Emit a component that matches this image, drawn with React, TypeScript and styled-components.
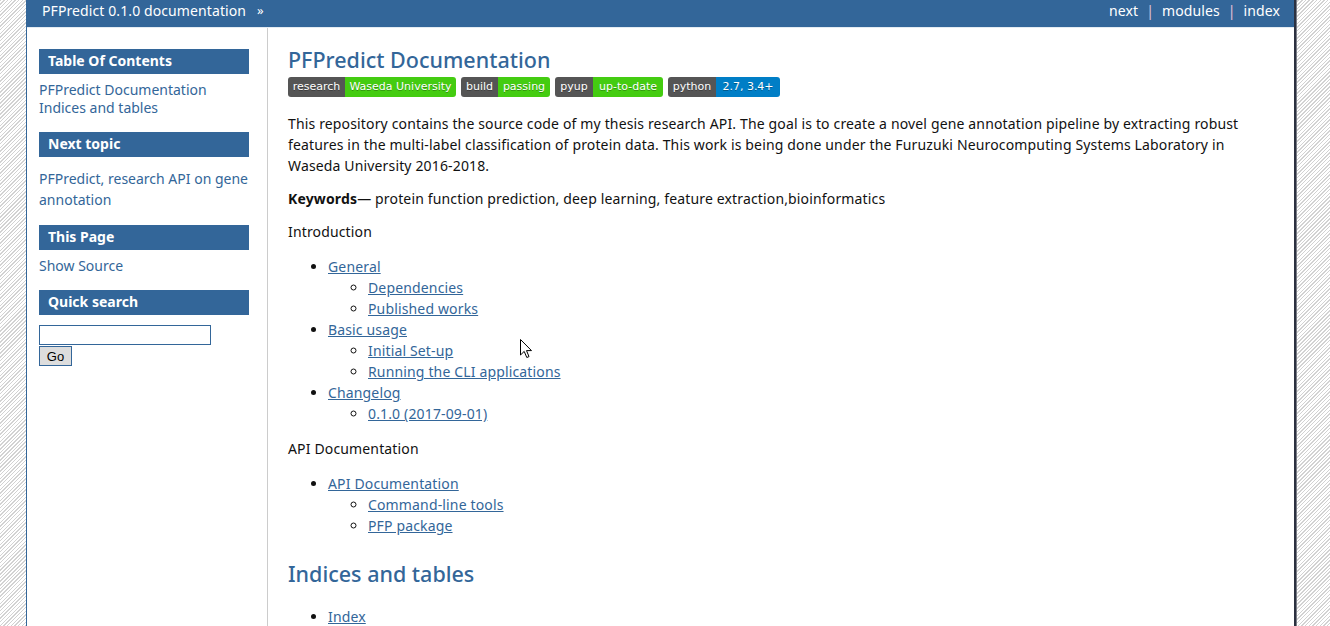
import React from "react";
import styled, { createGlobalStyle } from "styled-components";

const GlobalStyle = createGlobalStyle`
  html, body { margin: 0; padding: 0; }
  body {
    font-family: "Noto Sans", "DejaVu Sans", sans-serif;
    font-size: 14px;
    color: #111;
    background-color: #fff;
    background-image: repeating-linear-gradient(
      135deg,
      #d2d2d2 0px,
      #d2d2d2 1px,
      #ffffff 1px,
      #ffffff 2.6px
    );
  }
`;

const BLUE = "#336699";

const Page = styled.div`
  margin-left: 26px;
  width: 1267px;
  min-height: 626px;
  background: #fff;
  border-left: 1px solid ${BLUE};
  border-right: 2px solid #2c3140;
  box-shadow: 1px 0 0 #7a7d86;
  display: flex;
  flex-direction: column;
`;

const Header = styled.div`
  height: 27px;
  background: ${BLUE};
  color: #fff;
  display: flex;
  justify-content: space-between;
  align-items: flex-start;
  padding: 0 14px 0 15px;
  line-height: 21px;
  font-size: 14px;
  letter-spacing: 0.1px;
  border-bottom: 1px solid #e4ebf2;
`;

const Crumb = styled.div`
  display: flex;
  gap: 11px;
`;

const Raquo = styled.span`
  font-size: 13px;
`;

const NavLinks = styled.div`
  display: flex;
  gap: 8px;
`;

const Sep = styled.span`
  color: #e3c3d8;
`;

const Body = styled.div`
  flex: 1;
  display: flex;
`;

const Sidebar = styled.div`
  width: 228px;
  padding: 21px 0 0 12px;
  border-right: 1px solid #cccccc;
  flex-shrink: 0;
`;

const SideHeading = styled.h3`
  width: 210px;
  height: 25px;
  box-sizing: border-box;
  margin: 0;
  padding-left: 9px;
  background: ${BLUE};
  color: #fff;
  font-size: 14px;
  font-weight: 700;
  line-height: 24px;
`;

const SideList = styled.ul<{ $after: number }>`
  list-style: none;
  margin: 7px 0 ${(p) => p.$after}px;
  padding: 0;
  line-height: 18px;
`;

const SideP = styled.p`
  margin: 11px 0 15px;
  width: 212px;
  line-height: 21px;
`;

const SideLink = styled.a`
  color: ${BLUE};
  text-decoration: none;
`;

const SearchBox = styled.div`
  margin-top: 10px;
  display: flex;
  flex-direction: column;
  align-items: flex-start;
`;

const SearchInput = styled.input`
  width: 172px;
  height: 20px;
  box-sizing: border-box;
  border: 1px solid ${BLUE};
  margin: 0;
  padding: 0 2px;
`;

const GoButton = styled.button`
  height: 20px;
  width: 33px;
  box-sizing: border-box;
  margin-top: 1px;
  padding: 0;
  border: 1px solid ${BLUE};
  background: #dddddd;
  font-family: "Liberation Sans", Arial, sans-serif;
  font-size: 13px;
  color: #000;
`;

const Main = styled.div`
  flex: 1;
  padding: 16px 20px 0 20px;
  letter-spacing: 0.15px;
`;

const Title = styled.h1<{ $top?: number }>`
  margin: ${(p) => p.$top ?? 0}px 0 0;
  font-size: 21.5px;
  font-weight: 500;
  line-height: 32px;
  color: ${BLUE};
  letter-spacing: 0;
`;

const Badges = styled.div`
  display: flex;
  gap: 5px;
  margin-top: 1px;
  margin-bottom: 16px;
`;

const Badge = styled.span`
  display: inline-flex;
  height: 20px;
  border-radius: 3px;
  overflow: hidden;
  font-family: "DejaVu Sans", Verdana, sans-serif;
  font-size: 11px;
  letter-spacing: 0;
  color: #fff;
  text-shadow: 0 1px 0 rgba(1, 1, 1, 0.3);
`;

const BadgePart = styled.span<{ $bg: string; $w: number }>`
  display: inline-flex;
  align-items: center;
  justify-content: center;
  width: ${(p) => p.$w}px;
  background: ${(p) => p.$bg};
  line-height: 20px;
  white-space: nowrap;
`;

const Para = styled.p<{ $after?: number }>`
  margin: 0 0 ${(p) => p.$after ?? 12}px;
  line-height: 21px;
`;

const Caption = styled.p<{ $top: number }>`
  margin: ${(p) => p.$top}px 0 14px;
  line-height: 21px;
`;

const List = styled.ul<{ $nested?: boolean; $top?: number }>`
  margin: ${(p) => p.$top ?? 0}px 0 0;
  padding-left: 40px;
  line-height: 21px;
  list-style-type: ${(p) => (p.$nested ? "circle" : "disc")};
`;

const Link = styled.a`
  color: ${BLUE};
  text-decoration: underline;
`;

const Cursor = styled.svg`
  position: absolute;
  left: 520px;
  top: 339px;
`;

type Item = { label: string; children?: string[] };

const intro: Item[] = [
  { label: "General", children: ["Dependencies", "Published works"] },
  { label: "Basic usage", children: ["Initial Set-up", "Running the CLI applications"] },
  { label: "Changelog", children: ["0.1.0 (2017-09-01)"] },
];

const api: Item[] = [
  { label: "API Documentation", children: ["Command-line tools", "PFP package"] },
];

const badges = [
  { l: "research", lw: 57, r: "Waseda University", rw: 111, c: "#4c1" },
  { l: "build", lw: 37, r: "passing", rw: 52, c: "#4c1" },
  { l: "pyup", lw: 38, r: "up-to-date", rw: 70, c: "#4c1" },
  { l: "python", lw: 48, r: "2.7, 3.4+", rw: 64, c: "#007ec6" },
];

function Toc({ items }: { items: Item[] }) {
  return (
    <List>
      {items.map((it) => (
        <li key={it.label}>
          <Link href="#">{it.label}</Link>
          {it.children && (
            <List $nested>
              {it.children.map((c) => (
                <li key={c}>
                  <Link href="#">{c}</Link>
                </li>
              ))}
            </List>
          )}
        </li>
      ))}
    </List>
  );
}

export default function App() {
  return (
    <>
      <GlobalStyle />
      <Page>
        <Header>
          <Crumb>
            <span>PFPredict 0.1.0 documentation</span>
            <Raquo>»</Raquo>
          </Crumb>
          <NavLinks>
            <span>next</span>
            <Sep>|</Sep>
            <span>modules</span>
            <Sep>|</Sep>
            <span>index</span>
          </NavLinks>
        </Header>
        <Body>
          <Sidebar>
            <SideHeading>Table Of Contents</SideHeading>
            <SideList $after={15}>
              <li><SideLink href="#">PFPredict Documentation</SideLink></li>
              <li><SideLink href="#">Indices and tables</SideLink></li>
            </SideList>
            <SideHeading>Next topic</SideHeading>
            <SideP>
              <SideLink href="#">PFPredict, research API on gene annotation</SideLink>
            </SideP>
            <SideHeading>This Page</SideHeading>
            <SideList $after={15}>
              <li><SideLink href="#">Show Source</SideLink></li>
            </SideList>
            <SideHeading>Quick search</SideHeading>
            <SearchBox>
              <SearchInput type="text" />
              <GoButton>Go</GoButton>
            </SearchBox>
          </Sidebar>
          <Main>
            <Title>PFPredict Documentation</Title>
            <Badges>
              {badges.map((b) => (
                <Badge key={b.l}>
                  <BadgePart $bg="#555" $w={b.lw}>{b.l}</BadgePart>
                  <BadgePart $bg={b.c} $w={b.rw}>{b.r}</BadgePart>
                </Badge>
              ))}
            </Badges>
            <Para>
              This repository contains the source code of my thesis research API. The goal is to create a novel gene
              annotation pipeline by extracting robust features in the multi-label classification of protein data. This
              work is being done under the Furuzuki Neurocomputing Systems Laboratory in Waseda University 2016-2018.
            </Para>
            <Para $after={0}>
              <b>Keywords</b>— protein function prediction, deep learning, feature extraction,bioinformatics
            </Para>
            <Caption $top={12}>Introduction</Caption>
            <Toc items={intro} />
            <Caption $top={14}>API Documentation</Caption>
            <Toc items={api} />
            <Title $top={22}>Indices and tables</Title>
            <List $top={16}>
              <li><Link href="#">Index</Link></li>
            </List>
          </Main>
        </Body>
      </Page>
      <Cursor width="13" height="20" viewBox="0 0 13 20">
        <path d="M0.5 0.5 L0.5 16 L4.2 12.4 L6.8 18.5 L9 17.6 L6.5 11.6 L11.5 11.6 Z" fill="#fff" stroke="#000" strokeWidth="1" />
      </Cursor>
    </>
  );
}
